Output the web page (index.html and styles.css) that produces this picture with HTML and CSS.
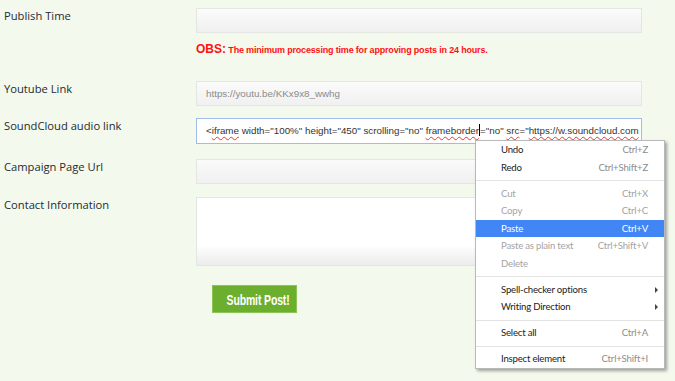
FILE: index.html
```html
<!DOCTYPE html>
<html>
<head>
<meta charset="utf-8">
<link rel="stylesheet" href="styles.css">
</head>
<body>
<div class="form">
  <div class="row r-publish">
    <div class="label">Publish Time</div>
    <div class="field">
      <div class="input"></div>
      <div class="note"><b>OBS:</b> The minimum processing time for approving posts in 24 hours.</div>
    </div>
  </div>
  <div class="row r-youtube">
    <div class="label">Youtube Link</div>
    <div class="field"><div class="input"><span class="val">https://youtu.be/KKx9x8_wwhg</span></div></div>
  </div>
  <div class="row r-sc">
    <div class="label">SoundCloud audio link</div>
    <div class="field"><div class="input focus"><span class="code">&lt;<span class="sp">iframe</span> width="100%" height="450" scrolling="no" <span class="sp">frameborder</span><span class="caret"></span>="no" <span class="sp">src</span>="<span class="sp">https://w.soundcloud.com</span></span></div></div>
  </div>
  <div class="row r-camp">
    <div class="label">Campaign Page Url</div>
    <div class="field"><div class="input"></div></div>
  </div>
  <div class="row r-contact">
    <div class="label">Contact Information</div>
    <div class="field"><div class="textarea"></div></div>
  </div>
  <div class="row r-submit">
    <div class="label"></div>
    <div class="field"><button class="submit"><span class="btxt">Submit Post!</span></button></div>
  </div>
</div>

<div class="menu">
  <div class="item"><span>Undo</span><span class="key">Ctrl+Z</span></div>
  <div class="item"><span>Redo</span><span class="key">Ctrl+Shift+Z</span></div>
  <div class="sep"></div>
  <div class="item dis"><span>Cut</span><span class="key">Ctrl+X</span></div>
  <div class="item dis"><span>Copy</span><span class="key">Ctrl+C</span></div>
  <div class="item active"><span>Paste</span><span class="key">Ctrl+V</span></div>
  <div class="item dis"><span>Paste as plain text</span><span class="key">Ctrl+Shift+V</span></div>
  <div class="item dis"><span>Delete</span><span class="key"></span></div>
  <div class="sep"></div>
  <div class="item sub"><span>Spell-checker options</span><span class="arrow"></span></div>
  <div class="item sub"><span>Writing Direction</span><span class="arrow"></span></div>
  <div class="sep"></div>
  <div class="item"><span>Select all</span><span class="key">Ctrl+A</span></div>
  <div class="sep"></div>
  <div class="item"><span>Inspect element</span><span class="key">Ctrl+Shift+I</span></div>
</div>
</body>
</html>
```

FILE: styles.css
```css
html, body {
  margin: 0;
  padding: 0;
  background: #f3f9ed;
  width: 675px;
  height: 381px;
  overflow: hidden;
}
.form {
  padding-top: 8px;
  display: flex;
  flex-direction: column;
}
.row {
  display: flex;
}
.label {
  width: 192px;
  padding-left: 4px;
  font-family: "Open Sans", sans-serif;
  font-size: 11.2px;
  line-height: 16px;
  color: #262a33;
}
.field {
  width: 446px;
}
.input {
  box-sizing: border-box;
  height: 25px;
  border: 1px solid #e4e6e2;
  background: linear-gradient(#fbfbfb, #f0f0f0);
  padding-left: 9px;
  font-family: "Liberation Sans", Arial, sans-serif;
  font-size: 9.8px;
  line-height: 23px;
  white-space: nowrap;
  overflow: hidden;
}
.input .val { color: #8a8a8a; }
.input.focus {
  height: 26px;
  border-color: #9fbde8;
  background: #fff;
  line-height: 24px;
  color: #333;
}
.sp {
  text-decoration: underline wavy #e33;
  text-decoration-thickness: 1px;
  text-underline-offset: 2px;
}
.caret {
  display: inline-block;
  width: 1px;
  height: 12px;
  background: #000;
  vertical-align: -2px;
}
.note {
  margin-top: 8px;
  font-family: "Liberation Sans", Arial, sans-serif;
  font-size: 9px;
  font-weight: bold;
  line-height: 16px;
  letter-spacing: -0.18px;
  color: #f11;
}
.note b { font-size: 12px; letter-spacing: 0; }
.r-youtube { margin-top: 23px; }
.r-sc { margin-top: 12px; }
.r-camp { margin-top: 15px; }
.r-contact { margin-top: 13px; }
.textarea {
  box-sizing: border-box;
  height: 69px;
  border: 1px solid #e4e6e2;
  background: linear-gradient(#fff 0, #fff 70%, #ececec 100%);
}
.r-submit { margin-top: 19px; }
.submit {
  margin-left: 16px;
  width: 85px;
  height: 28px;
  border: 1px solid #8cc456;
  background: #6cae2e;
  color: #fff;
  font-family: "Liberation Sans", Arial, sans-serif;
  font-size: 15px;
  font-weight: bold;
  padding: 0;
  white-space: nowrap;
  overflow: hidden;
}
.btxt {
  display: inline-block;
  transform: scaleX(0.7);
  letter-spacing: -0.2px;
}
.menu {
  position: absolute;
  left: 475px;
  top: 140px;
  width: 190px;
  box-sizing: border-box;
  background: #fff;
  border: 1px solid #b9b9b9;
  box-shadow: 2px 2px 3px rgba(0,0,0,0.35);
  font-family: Lato, "Open Sans", sans-serif;
  font-size: 9.6px;
  letter-spacing: -0.2px;
  color: #222;
}
.item {
  height: 17.5px;
  display: flex;
  align-items: center;
  justify-content: space-between;
  padding-left: 25px;
  padding-right: 16px;
  position: relative;
}
.item .key { color: #8c8c8c; }
.item.dis { color: #a3a3a3; }
.item.dis .key { color: #a3a3a3; }
.item.active { background: #4285f4; color: #fff; }
.item.active .key { color: #fff; }
.sep {
  height: 1px;
  background: #e3e3e3;
  margin: 4px 0 3.5px;
}
.arrow {
  position: absolute;
  right: 6px;
  top: 6px;
  width: 0;
  height: 0;
  border-left: 3px solid #444;
  border-top: 3px solid transparent;
  border-bottom: 3px solid transparent;
}
```
